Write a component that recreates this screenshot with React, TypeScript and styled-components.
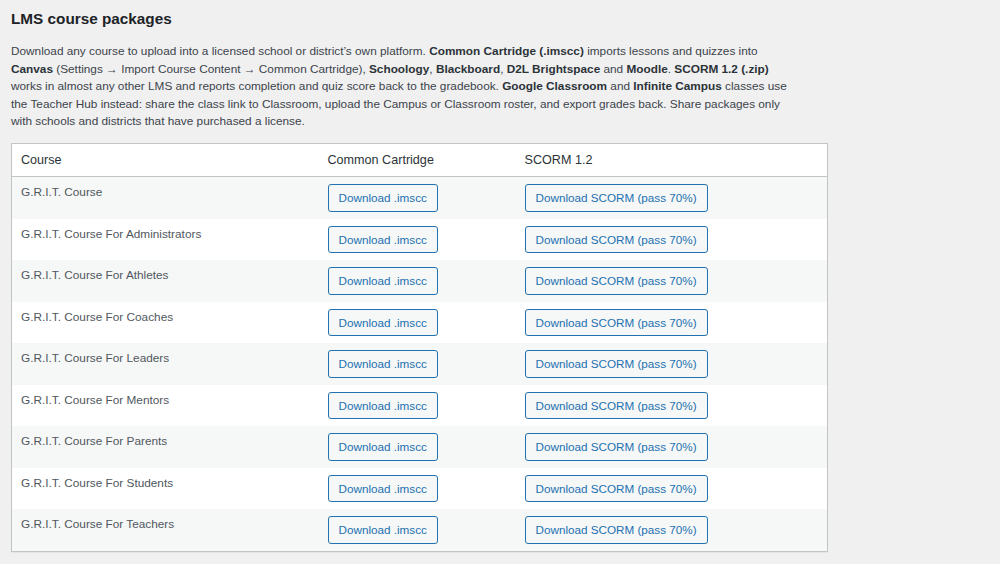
import React from "react";
import styled, { createGlobalStyle } from "styled-components";

const GlobalStyle = createGlobalStyle`
  html, body {
    margin: 0;
    padding: 0;
    background: #f0f0f1;
  }
  body {
    font-family: "Liberation Sans", Arial, sans-serif;
    font-size: 11.8px;
    color: #3c434a;
  }
`;

const Page = styled.div`
  padding: 7px 11px 0 11px;
  min-height: 564px;
  box-sizing: border-box;
`;

const Title = styled.h2`
  margin: 0;
  font-size: 15.3px;
  line-height: 23px;
  font-weight: 700;
  color: #1d2327;
`;

const Intro = styled.p`
  margin: 13px 0 12.5px 0;
  max-width: 782px;
  font-size: 11.8px;
  line-height: 17.5px;
  color: #3c434a;
  b {
    font-weight: 700;
    color: #2c3338;
  }
`;

const Table = styled.table`
  width: 817px;
  border-collapse: collapse;
  border-spacing: 0;
  background: #fff;
  border: 1px solid #c3c4c7;
  box-shadow: 0 1px 1px rgba(0, 0, 0, 0.04);
  table-layout: fixed;
`;

const HeadCell = styled.th<{ $w?: number }>`
  ${(p) => (p.$w ? `width: ${p.$w}px;` : "")}
  text-align: left;
  font-weight: 400;
  font-size: 12.6px;
  line-height: 18px;
  color: #2c3338;
  padding: 7px 9px;
  border-bottom: 1px solid #c3c4c7;
  box-sizing: border-box;
`;

const Row = styled.tr`
  &:nth-child(odd) {
    background: #f6f7f7;
  }
`;

const Cell = styled.td`
  vertical-align: top;
  padding: 7px 9px;
  font-size: 11.8px;
  line-height: 17px;
  color: #50575e;
`;

const Button = styled.a`
  display: inline-block;
  box-sizing: border-box;
  height: 27.5px;
  line-height: 25.5px;
  padding: 0 10px;
  font-size: 11.7px;
  color: #2271b1;
  background: #f6f7f7;
  border: 1px solid #2271b1;
  border-radius: 3px;
  text-decoration: none;
  white-space: nowrap;
  cursor: pointer;
`;

const courses = [
  "G.R.I.T. Course",
  "G.R.I.T. Course For Administrators",
  "G.R.I.T. Course For Athletes",
  "G.R.I.T. Course For Coaches",
  "G.R.I.T. Course For Leaders",
  "G.R.I.T. Course For Mentors",
  "G.R.I.T. Course For Parents",
  "G.R.I.T. Course For Students",
  "G.R.I.T. Course For Teachers",
];

export default function App() {
  return (
    <>
      <GlobalStyle />
      <Page>
        <Title>LMS course packages</Title>
        <Intro>
          Download any course to upload into a licensed school or district’s own platform.{" "}
          <b>Common Cartridge (.imscc)</b> imports lessons and quizzes into <b>Canvas</b> (Settings →
          Import Course Content → Common Cartridge), <b>Schoology</b>, <b>Blackboard</b>,{" "}
          <b>D2L Brightspace</b> and <b>Moodle</b>. <b>SCORM 1.2 (.zip)</b> works in almost any other
          LMS and reports completion and quiz score back to the gradebook. <b>Google Classroom</b> and{" "}
          <b>Infinite Campus</b> classes use the Teacher Hub instead: share the class link to Classroom,
          upload the Campus or Classroom roster, and export grades back. Share packages only with
          schools and districts that have purchased a license.
        </Intro>
        <Table>
          <thead>
            <tr>
              <HeadCell $w={307}>Course</HeadCell>
              <HeadCell $w={197}>Common Cartridge</HeadCell>
              <HeadCell>SCORM 1.2</HeadCell>
            </tr>
          </thead>
          <tbody>
            {courses.map((c) => (
              <Row key={c}>
                <Cell>{c}</Cell>
                <Cell>
                  <Button>Download .imscc</Button>
                </Cell>
                <Cell>
                  <Button>Download SCORM (pass 70%)</Button>
                </Cell>
              </Row>
            ))}
          </tbody>
        </Table>
      </Page>
    </>
  );
}
